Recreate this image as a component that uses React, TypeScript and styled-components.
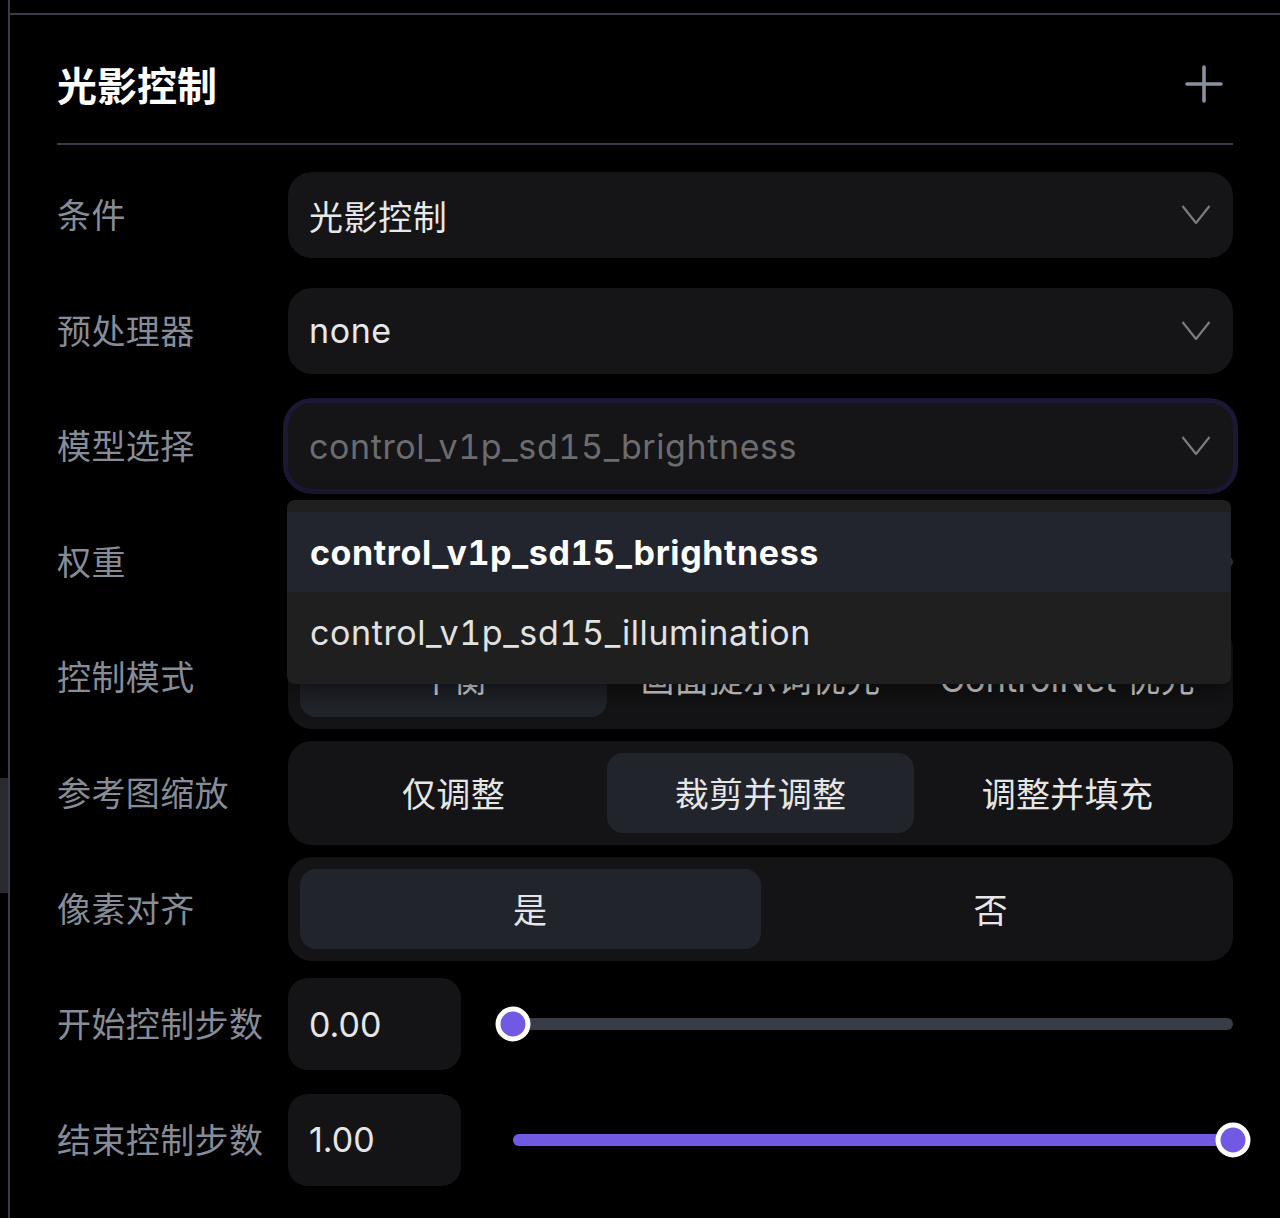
import React from 'react';
import styled, { createGlobalStyle } from 'styled-components';

const Global = createGlobalStyle`
  html, body { margin: 0; padding: 0; background: #000; }
  body {
    font-family: Inter, "Noto Sans CJK SC", sans-serif;
    -webkit-font-smoothing: antialiased;
  }
  * { box-sizing: border-box; }
`;

const Page = styled.div`
  display: flex;
  min-height: 1218px;
  background: #000;
  overflow: hidden;
`;

const Gutter = styled.div`
  width: 10px;
  flex: none;
  border-right: 2px solid #3a3c47;
  padding-top: 778px;
`;

const ScrollThumb = styled.div`
  width: 8px;
  height: 115px;
  background: #2a2b31;
`;

const Panel = styled.main`
  flex: 1;
  margin-top: 13px;
  border-top: 2px solid #3a3c47;
  padding: 0 47px;
`;

const Header = styled.header`
  margin-top: 12px;
  height: 118px;
  display: flex;
  align-items: center;
  justify-content: space-between;
  border-bottom: 2px solid #3a3c47;
  padding-bottom: 2px;
`;

const Title = styled.h1`
  margin: 0;
  font-size: 40px;
  font-weight: 700;
  color: #fff;
  letter-spacing: 0;
`;

const AddButton = styled.button`
  margin-right: 9px;
  width: 40px;
  height: 40px;
  padding: 0;
  border: none;
  background: transparent;
  display: flex;
  align-items: center;
  justify-content: center;
`;

const Form = styled.div`
  padding-top: 18px;
  display: flex;
  flex-direction: column;
  gap: 11.6px;
`;

const Row = styled.div`
  display: grid;
  grid-template-columns: 231px 1fr;
  align-items: center;
  height: 104px;
`;

const Label = styled.div`
  font-size: 34px;
  color: #878c99;
  white-space: nowrap;
  letter-spacing: 0.4px;
  margin-top: -3px;
`;

const Control = styled.div`
  position: relative;
`;

const Select = styled.div<{ $focused?: boolean }>`
  height: 86px;
  border-radius: 24px;
  background: #151517;
  display: flex;
  align-items: center;
  justify-content: space-between;
  padding: 0 22px 0 21px;
  font-size: 34px;
  font-feature-settings: 'tnum';
  letter-spacing: 0.6px;
  color: ${(p) => (p.$focused ? '#6c6c6e' : '#e8e8e8')};
  box-shadow: ${(p) => (p.$focused ? '0 0 0 5px #1b1734' : 'none')};
`;

const Segmented = styled.div<{ $count: number }>`
  height: 104px;
  border-radius: 24px;
  background: #141416;
  padding: 12px;
  display: grid;
  grid-template-columns: repeat(${(p) => p.$count}, 1fr);
`;

const Segment = styled.div<{ $active?: boolean }>`
  border-radius: 16px;
  background: ${(p) => (p.$active ? '#22242c' : 'transparent')};
  display: flex;
  align-items: center;
  justify-content: center;
  font-size: 34px;
  color: #e6e6e6;
  white-space: nowrap;
  letter-spacing: 0.3px;
`;

const SliderRow = styled.div`
  display: flex;
  align-items: center;
`;

const NumberBox = styled.div`
  width: 173px;
  height: 92px;
  flex: none;
  border-radius: 20px;
  background: #141416;
  display: flex;
  align-items: center;
  padding-left: 21px;
  font-size: 34px;
  color: #e6e6e6;
`;

const Track = styled.div`
  position: relative;
  flex: 1;
  margin-left: 52px;
  height: 12px;
  border-radius: 6px;
  background: #393b46;
`;

const Fill = styled.div`
  position: absolute;
  left: 0;
  top: 0;
  bottom: 0;
  border-radius: 6px;
  background: #7159e3;
`;

const Thumb = styled.div`
  position: absolute;
  top: 50%;
  width: 35px;
  height: 35px;
  border-radius: 50%;
  border: 5px solid #fff;
  background: #7159e3;
  transform: translate(-50%, -50%);
`;

const Menu = styled.div`
  position: absolute;
  top: calc(100% + 11px);
  left: -1px;
  right: 2px;
  z-index: 10;
  background: #1f1f1f;
  border-radius: 8px;
  padding: 12px 0;
  box-shadow: 0 8px 24px rgba(0, 0, 0, 0.5);
`;

const MenuItem = styled.div<{ $active?: boolean }>`
  height: 80px;
  display: flex;
  align-items: center;
  padding-left: 23px;
  font-size: 34px;
  font-feature-settings: 'tnum';
  letter-spacing: 0.6px;
  background: ${(p) => (p.$active ? '#23252e' : 'transparent')};
  color: ${(p) => (p.$active ? '#fff' : '#e2e2e2')};
  font-weight: ${(p) => (p.$active ? 700 : 400)};
`;

const Chevron = () => (
  <svg width="30" height="22" viewBox="0 0 30 22" fill="none">
    <polyline points="1.5,2 15,19 28.5,2" stroke="#7b7b7d" strokeWidth="2.2" strokeLinejoin="round" />
  </svg>
);

const PlusIcon = () => (
  <svg width="38" height="38" viewBox="0 0 38 38" fill="none">
    <path d="M19 2v34M2 19h34" stroke="#8b90a0" strokeWidth="3.6" strokeLinecap="round" />
  </svg>
);

const Slider = ({ value }: { value: number }) => (
  <Track>
    <Fill style={{ width: `${value * 100}%` }} />
    <Thumb style={{ left: `${value * 100}%` }} />
  </Track>
);

const SegmentGroup = ({ options, active }: { options: string[]; active: number }) => (
  <Segmented $count={options.length}>
    {options.map((o, i) => (
      <Segment key={o} $active={i === active}>
        {o}
      </Segment>
    ))}
  </Segmented>
);

export default function App() {
  return (
    <>
      <Global />
      <Page>
        <Gutter>
          <ScrollThumb />
        </Gutter>
        <Panel>
          <Header>
            <Title>光影控制</Title>
            <AddButton aria-label="add">
              <PlusIcon />
            </AddButton>
          </Header>
          <Form>
            <Row>
              <Label>条件</Label>
              <Control>
                <Select>
                  <span>光影控制</span>
                  <Chevron />
                </Select>
              </Control>
            </Row>
            <Row>
              <Label>预处理器</Label>
              <Control>
                <Select>
                  <span>none</span>
                  <Chevron />
                </Select>
              </Control>
            </Row>
            <Row>
              <Label>模型选择</Label>
              <Control>
                <Select $focused>
                  <span>control_v1p_sd15_brightness</span>
                  <Chevron />
                </Select>
                <Menu>
                  <MenuItem $active>control_v1p_sd15_brightness</MenuItem>
                  <MenuItem>control_v1p_sd15_illumination</MenuItem>
                </Menu>
              </Control>
            </Row>
            <Row>
              <Label>权重</Label>
              <Control>
                <SliderRow>
                  <NumberBox>1.00</NumberBox>
                  <Slider value={0.5} />
                </SliderRow>
              </Control>
            </Row>
            <Row>
              <Label>控制模式</Label>
              <Control>
                <SegmentGroup options={['平衡', '画面提示词优先', 'ControlNet 优先']} active={0} />
              </Control>
            </Row>
            <Row>
              <Label>参考图缩放</Label>
              <Control>
                <SegmentGroup options={['仅调整', '裁剪并调整', '调整并填充']} active={1} />
              </Control>
            </Row>
            <Row>
              <Label>像素对齐</Label>
              <Control>
                <SegmentGroup options={['是', '否']} active={0} />
              </Control>
            </Row>
            <Row>
              <Label>开始控制步数</Label>
              <Control>
                <SliderRow>
                  <NumberBox>0.00</NumberBox>
                  <Slider value={0} />
                </SliderRow>
              </Control>
            </Row>
            <Row>
              <Label>结束控制步数</Label>
              <Control>
                <SliderRow>
                  <NumberBox>1.00</NumberBox>
                  <Slider value={1} />
                </SliderRow>
              </Control>
            </Row>
          </Form>
        </Panel>
      </Page>
    </>
  );
}
